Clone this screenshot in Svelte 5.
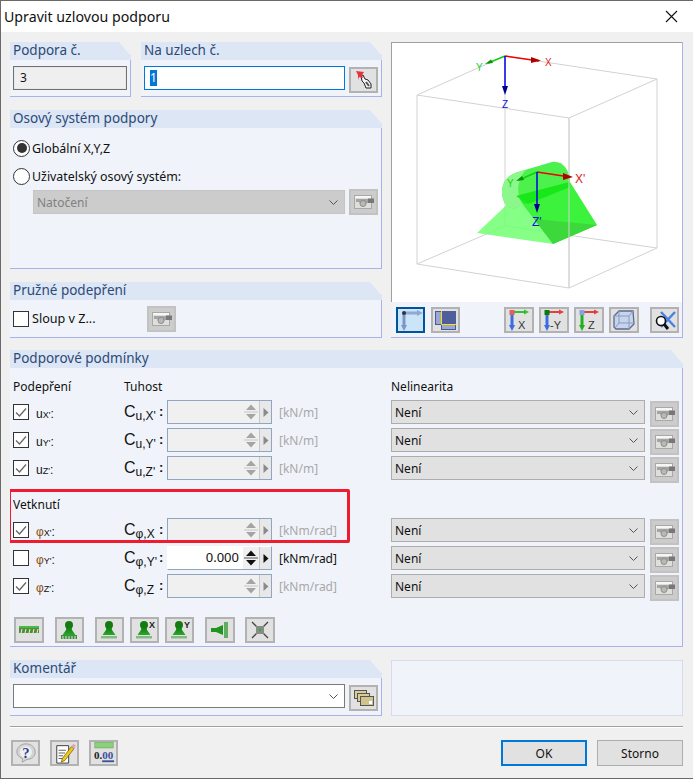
<script>
const supports = [
  { sym: "u", axis: "X", c: "u,X'", unit: "[kN/m]", checked: true, on: false },
  { sym: "u", axis: "Y", c: "u,Y'", unit: "[kN/m]", checked: true, on: false },
  { sym: "u", axis: "Z", c: "u,Z'", unit: "[kN/m]", checked: true, on: false },
];
const fixes = [
  { sym: "φ", axis: "X", c: "φ,X", unit: "[kNm/rad]", checked: true, on: false },
  { sym: "φ", axis: "Y", c: "φ,Y'", unit: "[kNm/rad]", checked: false, on: true, value: "0.000" },
  { sym: "φ", axis: "Z", c: "φ,Z", unit: "[kNm/rad]", checked: true, on: false },
];
const viewX = [
  { a: "#3a6ee0", b: "#30c030", c: "#e06060", t: "X" },
  { a: "#3a6ee0", b: "#e04040", c: "#0a7a0a", t: "-Y" },
  { a: "#20b020", b: "#e04040", c: "#8aa0e8", t: "Z" },
];
</script>

{#snippet check(on)}
  <span class="check">
    {#if on}
      <svg width="14" height="14" viewBox="0 0 14 14"><path d="M2 7.5 L5.5 11 L12 3.5" fill="none" stroke="#666" stroke-width="1.3"/></svg>
    {/if}
  </span>
{/snippet}

{#snippet chevron()}
  <svg class="chev" width="9" height="5" viewBox="0 0 9 5"><path d="M0.5 0.5 L4.5 4.5 L8.5 0.5" fill="none" stroke="#555" stroke-width="1"/></svg>
{/snippet}

{#snippet offIcon()}
  <svg width="20" height="16" viewBox="0 0 20 16">
    <rect x="0.5" y="1.5" width="17" height="13" fill="#dededa" stroke="#a8a8a8"/>
    <rect x="1" y="2" width="16" height="2" fill="#f6f6f6"/>
    <path d="M2 5 H19 V9 H13 L11 11 H7 L5 8 H2 Z" fill="#a4a4a4"/>
    <path d="M14 4.5 H20 V9 H14 Z" fill="#777"/>
    <circle cx="9" cy="9.5" r="3" fill="#b8b8b8" stroke="#8e8e8e"/>
  </svg>
{/snippet}

{#snippet spin(on)}
  <div class="spin" class:on>
    <div class="val">{on ? "0.000" : ""}</div>
    <div class="arrows">
      <svg width="16" height="22" viewBox="0 0 16 22">
        <path d="M3 9 L8 3.5 L13 9 Z" fill={on ? "#111" : "#a4a4a4"}/>
        <path d="M1 11 H15" stroke={on ? "#555" : "#c4c4c4"}/>
        <path d="M3 13 L8 18.5 L13 13 Z" fill={on ? "#111" : "#a4a4a4"}/>
      </svg>
    </div>
    <div class="next">
      <svg width="6" height="9" viewBox="0 0 6 9"><path d="M0.5 0 L5.5 4.5 L0.5 9 Z" fill={on ? "#111" : "#8a8a8a"}/></svg>
    </div>
  </div>
{/snippet}

{#snippet condRow(r)}
  <div class="tick">
    {@render check(r.checked)}
    <span class="sym"><span class:phi={r.sym === "φ"}>{r.sym}</span><sub>{r.axis}'</sub>:</span>
  </div>
  <div class="cname"><span class="cc">C</span><sub>{r.c}</sub><b>:</b></div>
  {@render spin(r.on)}
  <div class="unit" class:on={r.on}>{r.unit}</div>
  <div class="select grey"><span>Není</span>{@render chevron()}</div>
  <button class="btn off low">{@render offIcon()}</button>
{/snippet}

{#snippet pawn(extra)}
  <svg width="24" height="20" viewBox="0 0 24 20">
    <defs>
      <linearGradient id="pg" x1="0" y1="0" x2="0" y2="1">
        <stop offset="0" stop-color="#0f7a0f"/>
        <stop offset="1" stop-color="#2aa82a"/>
      </linearGradient>
    </defs>
    <circle cx="11" cy="5" r="4" fill="#127c12"/>
    <path d="M8.5 7 H13.5 L14 10 L17.5 15 H4.5 L8 10 Z" fill="url(#pg)"/>
    {#if extra === "springs"}
      <path d="M3 15 H19 V19 H3 Z" fill="#3f8f3f"/>
      <path d="M5 16 V19 M8 16 V19 M11 16 V19 M14 16 V19 M17 16 V19" stroke="#d8e8d8" stroke-width="1"/>
    {:else}
      <path d="M3 16 H19 V18.5 H3 Z" fill="#86b886"/>
    {/if}
    {#if extra === "X" || extra === "Y"}
      <text x="16" y="8" class="tinyb">{extra}</text>
    {/if}
  </svg>
{/snippet}

<div class="dlg">
  <header class="titlebar">
    <span>Upravit uzlovou podporu</span>
    <svg width="13" height="13" viewBox="0 0 13 13"><path d="M1 1 L12 12 M12 1 L1 12" stroke="#111" stroke-width="1.1"/></svg>
  </header>

  <main class="content">
    <div class="top">
      <div class="left">
        <div class="two">
          <section class="panel no">
            <h3>Podpora č.</h3>
            <div class="pbody row-a"><div class="ro">3</div></div>
          </section>
          <section class="panel nodes">
            <h3>Na uzlech č.</h3>
            <div class="pbody row-a">
              <div class="focus"><span class="sel">1</span></div>
              <button class="btn low">
                <svg width="20" height="20" viewBox="0 0 20 20">
                  <path d="M7 6 L9 5 L11 9 L14 10 L17 14 L17 18 L12 18 L10 13 L8 11 Z" fill="#f4f4f4" stroke="#222"/>
                  <path d="M12 12 L15 16" stroke="#555" stroke-width="2"/>
                  <path d="M2 1 L10 2 L8 5 L9 8 L5 7 L4 10 L4 5 Z" fill="#e8303f"/>
                </svg>
              </button>
            </div>
          </section>
        </div>

        <section class="panel axis">
          <h3>Osový systém podpory</h3>
          <div class="pbody">
            <label class="radio first"><span class="dot on"></span>Globální X,Y,Z</label>
            <label class="radio"><span class="dot"></span>Uživatelský osový systém:</label>
            <div class="rot">
              <div class="select dis"><span>Natočení</span>{@render chevron()}</div>
              <button class="btn off">{@render offIcon()}</button>
            </div>
          </div>
        </section>

        <section class="panel elastic">
          <h3>Pružné podepření</h3>
          <div class="pbody col">
            {@render check(false)}
            <span class="col-label">Sloup v Z...</span>
            <button class="btn off">{@render offIcon()}</button>
          </div>
        </section>
      </div>

      <section class="preview">
        <div class="view">
          <svg width="291" height="259" viewBox="392 43 291 259">
            <g fill="none" stroke="#d2d2d2" stroke-width="1">
              <path d="M417 95 L505 56 L657 79 L569 118 Z"/>
              <path d="M417 264 L505 226 L657 248 L569 288 Z"/>
              <path d="M417 95 V264 M505 56 V226 M657 79 V248 M569 118 V288"/>
            </g>
            <polygon points="477,233 553,244 516,196" fill="#70ff70" fill-opacity="0.85"/>
            <polygon points="516,196 570,182 597,225 553,244" fill="#3cf23c"/>
            <polygon points="534,219 597,225 553,244" fill="#3cd83c"/>
            <path d="M518 172 L552 162 C562 160 570 170 570 182 L570 187 L515 208 C508 210 502 202 502 192 C502 182 508 175 518 172 Z" fill="#20ee20" fill-opacity="0.8"/>
            <path d="M518 172 C508 175 502 182 502 192 C502 202 508 210 515 208 L524 205 C516 198 516 180 526 170 Z" fill="#8cf88c"/>
            <polygon points="516,196 570,182 570,187 528,204" fill="#18e818"/>
            <path d="M569 118 V288" stroke="#d2d2d2"/>
            <path d="M505 56 L539 61" stroke="#f00000" stroke-width="1.5"/>
            <path d="M531 57 L541 60.5 L531 63 Z" fill="#b00000"/>
            <path d="M505 56 L488 63" stroke="#10d010" stroke-width="1.5"/>
            <path d="M485 64 L491 59.5 L493 63 Z" fill="#0a900a"/>
            <path d="M505 56 V88" stroke="#0000e8" stroke-width="1.5"/>
            <path d="M502 86 H508 L505 95 Z" fill="#000090"/>
            <text x="545" y="66" class="ax" fill="#e02020">X</text>
            <text x="476" y="71" class="ax" fill="#20d020">Y</text>
            <text x="502" y="108" class="ax" fill="#1010e0">Z</text>
            <path d="M537 172 L570 177" stroke="#f00000" stroke-width="1.5"/>
            <path d="M563 173 L573 177 L563 180 Z" fill="#b00000"/>
            <path d="M537 172 L519 180" stroke="#10d010" stroke-width="1.5"/>
            <path d="M516 181 L522 176 L524 180 Z" fill="#0a900a"/>
            <path d="M537 172 V206" stroke="#0000e8" stroke-width="1.5"/>
            <path d="M534 204 H540 L537 213 Z" fill="#000090"/>
            <text x="575" y="183" class="ax big" fill="#e02020">X'</text>
            <text x="507" y="187" class="ax" fill="#20d020">Y</text>
            <text x="532" y="226" class="ax big" fill="#1010e0">Z'</text>
          </svg>
        </div>
        <div class="viewbar">
          <button class="btn selected">
            <svg width="24" height="22" viewBox="0 0 24 22">
              <path d="M5 4 H20" stroke="#8ea8d8" stroke-width="3"/><path d="M18 1 L24 4 L18 7 Z" fill="#8ea8d8"/>
              <path d="M5 4 V18" stroke="#7d96c8" stroke-width="3"/><path d="M2 16 H8 L5 22 Z" fill="#7d96c8"/>
              <circle cx="5" cy="4" r="2" fill="#333"/>
            </svg>
          </button>
          <button class="btn second">
            <svg width="22" height="20" viewBox="0 0 22 20">
              <rect x="0.5" y="1.5" width="14" height="13" fill="#9aa8d8" stroke="#4a5a98"/>
              <rect x="6.5" y="8.5" width="14" height="11" fill="#9aa8d8" stroke="#4a5a98"/>
              <rect x="6" y="1" width="15" height="13" fill="#4f5f9c"/>
              <path d="M6.5 1 V14.5 H21" fill="none" stroke="#ffe000" stroke-width="1"/>
            </svg>
          </button>
          <span class="gap"></span>
          {#each viewX as v}
            <button class="btn tight">
              <svg width="24" height="22" viewBox="0 0 24 22">
                <path d="M5 3 H19" stroke={v.b} stroke-width="2"/><path d="M17 0.5 L22 3 L17 5.5 Z" fill={v.b}/>
                <path d="M5 3 V18" stroke={v.a} stroke-width="3"/><path d="M2 16 H8 L5 22 Z" fill={v.a}/>
                <rect x="2.5" y="1" width="5" height="5" fill={v.c}/>
                <text x={v.t === "-Y" ? 8 : 11} y="20" class="vt">{v.t}</text>
              </svg>
            </button>
          {/each}
          <button class="btn tight">
            <svg width="24" height="22" viewBox="0 0 24 22">
              <path d="M2 7 L7 2 H21 L22 15 L17 20 H4 L2 18 Z" fill="#c8d4ec" stroke="#5a6a90" stroke-width="1.3"/>
              <path d="M2 7 H17 V20 M17 7 L21 2 M7 2 V14 H22 M7 14 L3 19" fill="none" stroke="#8a9ac0"/>
            </svg>
          </button>
          <button class="btn last">
            <svg width="24" height="22" viewBox="0 0 24 22">
              <path d="M8 3 L22 18 M22 3 L8 18" stroke="#4a82e0" stroke-width="2.5"/>
              <circle cx="8" cy="12" r="4.5" fill="#fff" stroke="#111" stroke-width="1.6"/>
              <path d="M11 15 L15 20" stroke="#111" stroke-width="3"/>
            </svg>
          </button>
        </div>
      </section>
    </div>

    <section class="panel cond">
      <h3>Podporové podmínky</h3>
      <div class="pbody condbody">
        <div class="grid">
          <div class="hd">Podepření</div>
          <div class="hd span3">Tuhost</div>
          <div class="hd span2">Nelinearita</div>

          {#each supports as r}
            {@render condRow(r)}
          {/each}

          <div class="hd fixhd">Vetknutí</div>

          {#each fixes as r}
            {@render condRow(r)}
          {/each}
        </div>
        <div class="highlight"></div>

        <div class="tools">
          <button class="btn wide">
            <svg width="20" height="8" viewBox="0 0 20 8">
              <rect x="0" y="0" width="20" height="2" fill="#4cb84c"/>
              <path d="M0 2 H20 V7 H0 Z" fill="#4f8f2f"/>
              <path d="M3 3 L2 7 M7 3 L6 7 M11 3 L10 7 M15 3 L14 7 M19 3 L18 7" stroke="#eee"/>
            </svg>
          </button>
          <button class="btn m7">{@render pawn("springs")}</button>
          <button class="btn m7">{@render pawn("")}</button>
          <button class="btn m2">{@render pawn("X")}</button>
          <button class="btn m2">{@render pawn("Y")}</button>
          <button class="btn m7 wide">
            <svg width="20" height="16" viewBox="0 0 20 16">
              <path d="M1 6 H6 L13 3 V13 L6 10 H1 Z" fill="#1c961c"/>
              <rect x="14" y="0" width="4" height="16" fill="#5fae5f"/>
            </svg>
          </button>
          <button class="btn last2 wide">
            <svg width="20" height="18" viewBox="0 0 20 18">
              <path d="M2 1 L7 6 M18 1 L13 6 M2 17 L7 12 M18 17 L13 12" stroke="#444" stroke-width="1.3"/>
              <rect x="6" y="5" width="8" height="8" fill="#8a8a8a"/>
              <circle cx="10" cy="9" r="1.4" fill="#2bb52b"/>
            </svg>
          </button>
        </div>
      </div>
    </section>

    <div class="bottom-row">
      <section class="panel comment">
        <h3>Komentář</h3>
        <div class="pbody row-a">
          <div class="select white">{@render chevron()}</div>
          <button class="btn low">
            <svg width="20" height="16" viewBox="0 0 20 16">
              <rect x="0.5" y="0.5" width="12" height="8" fill="#d8cc98" stroke="#555"/>
              <rect x="3.5" y="3.5" width="12" height="8" fill="#d8cc98" stroke="#555"/>
              <rect x="6.5" y="6.5" width="13" height="9" fill="#d0c48c" stroke="#555"/>
              <rect x="15" y="11" width="3" height="3" fill="#fff"/>
            </svg>
          </button>
        </div>
      </section>
      <div class="blank"></div>
    </div>

    <hr />

    <footer class="foot">
      <button class="btn">
        <svg width="22" height="22" viewBox="0 0 24 24">
          <path d="M12 2 C18 2 22 6 22 11 C22 16 18 19 13 19 L8 22 L8 18 C4 16 2 14 2 11 C2 6 6 2 12 2 Z" fill="#d4d4d4" stroke="#a0a0a0"/>
          <circle cx="12" cy="11" r="6.5" fill="#f0f0f0"/>
          <text x="12" y="17" class="q">?</text>
        </svg>
      </button>
      <button class="btn">
        <svg width="22" height="22" viewBox="0 0 24 24">
          <path d="M3 4 H16 V23 H3 Z" fill="#fff" stroke="#333"/>
          <path d="M5 9 H13 M5 12 H12 M5 15 H10 M5 18 H10" stroke="#555"/>
          <path d="M9 18 L19 5 L22 7 L12 20 L8 22 Z" fill="#f0c818" stroke="#5a4a10" stroke-width="0.7"/>
          <path d="M19 5 L21 2 L24 4 L22 7 Z" fill="#e8a0c0"/>
        </svg>
      </button>
      <button class="btn">
        <svg width="24" height="22" viewBox="0 0 26 24">
          <rect x="3" y="0.5" width="20" height="6" fill="#8ccf7c" stroke="#5aa04a" stroke-width="0.6"/>
          <text x="2" y="19" class="num">0.</text>
          <text x="11" y="19" class="num blue">00</text>
          <path d="M11 21 H24" stroke="#3a4f9a" stroke-width="2"/>
        </svg>
      </button>
      <span class="spacer"></span>
      <button class="dbtn ok">OK</button>
      <button class="dbtn">Storno</button>
    </footer>
  </main>
</div>

<style>
  :global(body) {
    margin: 0;
    background: #f0f0f0;
  }

  .dlg {
    width: 693px;
    height: 779px;
    box-sizing: border-box;
    background: #f0f0f0;
    border-left: 1px solid #6a6a6a;
    border-top: 1px solid #6a6a6a;
    border-bottom: 1px solid #6a6a6a;
    font-family: "Noto Sans", "Open Sans", sans-serif;
    font-size: 12px;
    color: #111;
    overflow: hidden;
  }

  .titlebar {
    height: 31px;
    box-sizing: border-box;
    background: #fff;
    display: flex;
    align-items: center;
    justify-content: space-between;
    padding: 0 15px 1px 3px;
    font-size: 14.2px;
    color: #111;
  }

  .content {
    padding: 10px 10px 0 9px;
  }

  .top {
    display: flex;
    gap: 9px;
    height: 296px;
  }

  .left {
    width: 372px;
    display: flex;
    flex-direction: column;
    gap: 13px;
  }

  .two {
    display: flex;
    gap: 10px;
  }

  .panel {
    background: #f0f4fa;
    border-right: 1px solid #a9b2ea;
    border-bottom: 1px solid #a9b2ea;
    box-sizing: border-box;
    clip-path: polygon(0 0, calc(100% - 12px) 0, 100% 14px, 100% 100%, 0 100%);
    display: flex;
    flex-direction: column;
  }

  .panel h3 {
    margin: 0 -1px 0 0;
    height: 18px;
    line-height: 17px;
    background: #dce6f4;
    padding-left: 3px;
    font-size: 13.5px;
    font-weight: 400;
    color: #2c4a78;
    flex: none;
  }

  .pbody {
    flex: 1;
    padding-left: 3px;
    position: relative;
  }

  .no {
    width: 121px;
    height: 55px;
  }

  .nodes {
    flex: 1;
    height: 55px;
  }

  .row-a {
    display: flex;
    gap: 4px;
    padding: 6px 3px 0 3px;
    align-items: flex-start;
  }

  .ro {
    width: 114px;
    height: 24px;
    box-sizing: border-box;
    border: 1px solid #707070;
    outline: 1px solid #e8e8e8;
    outline-offset: -2px;
    background: #efefef;
    line-height: 22px;
    padding-left: 6px;
  }

  .focus {
    flex: 1;
    height: 24px;
    box-sizing: border-box;
    border: 1px solid #0078d7;
    background: #fff;
    padding: 3px 0 0 5px;
    line-height: 16px;
  }

  .sel {
    display: inline-block;
    width: 7px;
    height: 16px;
    background: #0078d7;
    color: #fff;
  }

  .btn {
    width: 29px;
    height: 26px;
    padding: 0;
    flex: none;
    box-sizing: border-box;
    background: #e1e1e1;
    border: 2px solid #b2b2b2;
    display: inline-flex;
    align-items: center;
    justify-content: center;
  }

  .btn.wide {
    width: 30px;
  }

  .btn.off {
    background: #cccccc;
    border-color: #c2c2c2;
  }

  .btn.low {
    margin-top: 1px;
  }

  .btn.selected {
    background: #cce4f7;
    border: 2px solid #005499;
  }

  .axis {
    height: 159px;
  }

  .radio {
    display: flex;
    align-items: center;
    gap: 2px;
    height: 28px;
    font-size: 12.4px;
  }

  .radio.first {
    margin-top: 6px;
  }

  .dot {
    width: 15px;
    height: 15px;
    border: 1px solid #333;
    border-radius: 50%;
    background: #fff;
    position: relative;
    flex: none;
  }

  .dot.on::after {
    content: "";
    position: absolute;
    left: 2.5px;
    top: 2.5px;
    width: 10px;
    height: 10px;
    border-radius: 50%;
    background: #333;
  }

  .rot {
    display: flex;
    gap: 4px;
    margin-left: 20px;
    margin-right: 3px;
    align-items: flex-start;
  }

  .rot .btn {
    margin-top: -1px;
  }

  .select {
    height: 24px;
    box-sizing: border-box;
    flex: 1;
    display: flex;
    align-items: center;
    justify-content: space-between;
    padding: 0 5px 0 3px;
    border: 1px solid #adadad;
  }

  .select.dis {
    background: #cccccc;
    border-color: #c4c4c4;
    color: #808080;
  }

  .select.grey {
    background: #e1e1e1;
  }

  .select.white {
    background: #fff;
    border-color: #7a7a7a;
    justify-content: flex-end;
  }

  .chev {
    margin-right: 1px;
  }

  .elastic {
    height: 56px;
  }

  .col {
    display: flex;
    align-items: center;
  }

  .check {
    width: 16px;
    height: 16px;
    flex: none;
    box-sizing: border-box;
    border: 1px solid #333;
    background: #fff;
    display: inline-flex;
    align-items: center;
    justify-content: center;
  }

  .col-label {
    margin-left: 3px;
    width: 115px;
    font-size: 12.6px;
  }

  .preview {
    width: 292px;
    box-sizing: border-box;
    border-right: 1px solid #a9b2ea;
    border-bottom: 1px solid #a9b2ea;
    display: flex;
    flex-direction: column;
    background: #f0f4fa;
  }

  .view {
    height: 260px;
    flex: none;
    background: #fff;
    border-top: 1px solid #a0a0a0;
    border-left: 1px solid #a0a0a0;
    box-sizing: border-box;
    overflow: hidden;
  }

  .view svg {
    display: block;
  }

  .viewbar {
    display: flex;
    align-items: center;
    padding: 5px 3px 0 5px;
    gap: 5px;
  }

  .btn.second {
    margin-left: 1px;
  }

  .gap {
    flex: 1;
  }

  .btn.tight {
    width: 30px;
  }

  .btn.last {
    margin-left: 6px;
  }

  .ax {
    font-family: "Liberation Sans", sans-serif;
    font-size: 10px;
  }

  .ax.big {
    font-size: 12px;
  }

  .vt {
    font-family: "Liberation Sans", sans-serif;
    font-size: 11px;
    fill: #333;
  }

  .cond {
    margin-top: 12px;
    height: 297px;
  }

  .condbody {
    padding-top: 7px;
  }

  .grid {
    display: grid;
    grid-template-columns: 111px 43px 105px 119px 254px 29px;
    grid-template-rows: 23px 28px 28px 28px 34px 28px 28px 28px;
    align-items: center;
  }

  .grid > .btn {
    margin-left: 5px;
    margin-top: 3px;
  }

  .hd {
    color: #111;
  }

  .span3 {
    grid-column: span 3;
  }

  .span2 {
    grid-column: span 2;
  }

  .fixhd {
    grid-column: 1 / -1;
    padding-top: 10px;
  }

  .tick {
    display: flex;
    align-items: center;
    gap: 7px;
  }

  .sym {
    font-size: 12px;
    line-height: 1;
    padding-top: 3px;
    font-family: "Liberation Sans", sans-serif;
  }

  .sym sub {
    font-size: 9px;
    vertical-align: baseline;
  }

  .phi {
    color: #8a4a10;
  }

  .cname {
    font-family: "Liberation Sans", sans-serif;
    display: flex;
    align-items: baseline;
    line-height: 1;
    position: relative;
  }

  .cc {
    font-size: 16px;
  }

  .cname sub {
    font-size: 12px;
    vertical-align: baseline;
    position: relative;
    top: 3px;
  }

  .cname b {
    position: absolute;
    left: 35px;
    top: 1px;
    font-weight: 700;
    font-size: 13px;
  }

  .spin {
    height: 24px;
    box-sizing: border-box;
    border: 1px solid #8fa5c0;
    background: #f0f0f0;
    display: flex;
    align-items: stretch;
  }

  .spin.on {
    background: #fff;
    border-color: #fff #8fa5c0 #8fa5c0 #fff;
  }

  .val {
    flex: 1;
    text-align: right;
    padding-right: 4px;
    line-height: 21px;
    font-size: 13px;
  }

  .arrows {
    width: 16px;
    background: #f0f0f0;
  }

  .arrows svg {
    display: block;
  }

  .next {
    width: 11px;
    border-left: 1px solid #c8c8c8;
    background: #e8e8e8;
    display: flex;
    align-items: center;
    justify-content: center;
  }

  .unit {
    padding-left: 7px;
    color: #a8a8a8;
  }

  .unit.on {
    color: #111;
  }

  .highlight {
    position: absolute;
    left: -2px;
    top: 121px;
    width: 342px;
    height: 54px;
    box-sizing: border-box;
    border: 3px solid #ed1c2e;
    border-radius: 2px;
    pointer-events: none;
  }

  .tools {
    display: flex;
    margin-top: 17px;
    margin-left: 1px;
  }

  .m7 {
    margin-left: 11px;
  }

  .m2 {
    margin-left: 6px;
  }

  .last2 {
    margin-left: 10px;
  }

  .tinyb {
    font-family: "Liberation Sans", sans-serif;
    font-size: 9px;
    font-weight: 700;
    fill: #222;
  }

  .bottom-row {
    display: flex;
    gap: 9px;
    margin-top: 13px;
  }

  .comment {
    width: 372px;
    height: 56px;
  }

  .blank {
    width: 292px;
    height: 56px;
    box-sizing: border-box;
    background: #f0f4fa;
    border: 1px solid #d4dcec;
  }

  hr {
    margin: 10px 0 0 0;
    border: 0;
    border-top: 1px solid #a0a0a0;
    border-bottom: 1px solid #fff;
  }

  .foot {
    display: flex;
    align-items: center;
    margin-top: 12px;
    gap: 10px;
    padding-left: 1px;
  }

  .spacer {
    flex: 1;
  }

  .dbtn {
    width: 86px;
    height: 26px;
    box-sizing: border-box;
    padding: 0;
    background: #e1e1e1;
    border: 1px solid #adadad;
    font: inherit;
    color: #111;
  }

  .dbtn.ok {
    border: 2px solid #0078d7;
  }

  .q {
    font-family: "Liberation Serif", serif;
    font-weight: 700;
    font-size: 16px;
    text-anchor: middle;
    fill: #2a3f8f;
  }

  .num {
    font-family: "Liberation Serif", serif;
    font-weight: 700;
    font-size: 12px;
    fill: #222;
  }

  .num.blue {
    fill: #3a4f9a;
  }
</style>
